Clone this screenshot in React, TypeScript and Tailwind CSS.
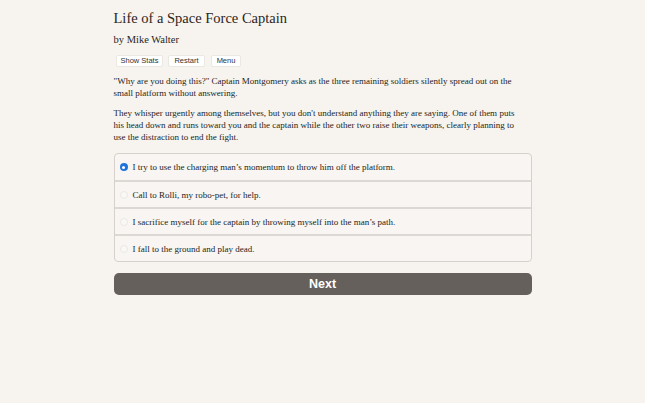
import React from "react";

const serif = { fontFamily: '"Liberation Serif", "Times New Roman", serif' };
const sans = { fontFamily: '"Liberation Sans", Arial, sans-serif' };

const options = [
  "I try to use the charging man\u2019s momentum to throw him off the platform.",
  "Call to Rolli, my robo-pet, for help.",
  "I sacrifice myself for the captain by throwing myself into the man\u2019s path.",
  "I fall to the ground and play dead.",
];

export default function App() {
  return (
    <div className="min-h-[403px] w-full bg-[#f7f4f0] text-[#222]" style={serif}>
      <div className="mx-auto w-[418px] pt-[8px]">
        <h1 className="text-[14.5px] leading-[20px] text-[#2a2522]">Life of a Space Force Captain</h1>
        <div className="mt-[5px] text-[10.5px] leading-[14px] text-[#2a2522]">by Mike Walter</div>
        <div className="mt-[8px] flex gap-[5px] pl-[2px]" style={sans}>
          <button className="h-[12px] rounded-[2px] border border-[#ebe7e3] bg-white px-[4px] text-[7.5px] leading-[10px] text-[#333]">Show Stats</button>
          <button className="h-[12px] rounded-[2px] border border-[#ebe7e3] bg-white px-[5px] text-[7.5px] leading-[10px] text-[#333]">Restart</button>
          <button className="ml-[1px] h-[12px] rounded-[2px] border border-[#ebe7e3] bg-white px-[5px] text-[7.5px] leading-[10px] text-[#333]">Menu</button>
        </div>
        <p className="mt-[8px] max-w-[410px] text-[9px] leading-[12px] text-[#231f1c]">
          "Why are you doing this?" Captain Montgomery asks as the three remaining soldiers silently spread out on the small platform without answering.
        </p>
        <p className="mt-[8px] max-w-[410px] text-[9px] leading-[12px] text-[#231f1c]">
          They whisper urgently among themselves, but you don't understand anything they are saying. One of them puts his head down and runs toward you and the captain while the other two raise their weapons, clearly planning to use the distraction to end the fight.
        </p>
        <div className="mt-[10px] overflow-hidden rounded-[4px] border border-[#d6d1cc] bg-[#f8f5f2]">
          {options.map((o, i) => (
            <div
              key={i}
              className={`flex items-center gap-[5px] pl-[5px] ${i > 0 ? "h-[27px] border-t-2 border-[#dcd8d4]" : "h-[26px]"}`}
            >
              {i === 0 ? (
                <span className="flex h-[8px] w-[8px] items-center justify-center rounded-full bg-[#1f74dc]">
                  <span className="h-[3px] w-[3px] rounded-full bg-white" />
                </span>
              ) : (
                <span className="h-[8px] w-[8px] rounded-full border border-[#ece8e4] bg-[#faf8f6]" />
              )}
              <span className="text-[9px] leading-[12px] text-[#231f1c]">{o}</span>
            </div>
          ))}
        </div>
        <button
          className="mt-[11px] flex h-[22px] w-full items-center justify-center rounded-[5px] bg-[#65605c] text-[12.5px] font-bold text-white"
          style={sans}
        >
          Next
        </button>
      </div>
    </div>
  );
}
